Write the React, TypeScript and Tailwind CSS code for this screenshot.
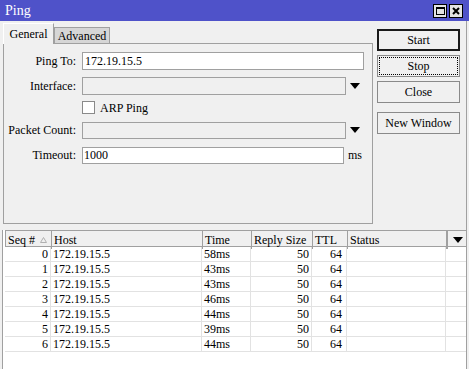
import React from 'react'

const ROWS = [
  { seq: 0, host: '172.19.15.5', time: '58ms', size: 50, ttl: 64 },
  { seq: 1, host: '172.19.15.5', time: '43ms', size: 50, ttl: 64 },
  { seq: 2, host: '172.19.15.5', time: '43ms', size: 50, ttl: 64 },
  { seq: 3, host: '172.19.15.5', time: '46ms', size: 50, ttl: 64 },
  { seq: 4, host: '172.19.15.5', time: '44ms', size: 50, ttl: 64 },
  { seq: 5, host: '172.19.15.5', time: '39ms', size: 50, ttl: 64 },
  { seq: 6, host: '172.19.15.5', time: '44ms', size: 50, ttl: 64 },
]

const COLS = 'grid grid-cols-[46px_151px_49px_61px_35px_99px_20px]'

function DownArrow() {
  return (
    <svg width="10" height="6" viewBox="0 0 10 6">
      <path d="M0 0 H10 L5 6 Z" fill="#000" />
    </svg>
  )
}

function Field({ label, children }: { label: string; children: React.ReactNode }) {
  return (
    <div className="flex items-center h-[18px]">
      <div className="w-[72px] text-right whitespace-nowrap">{label}</div>
      <div className="ml-[6px] flex items-center flex-1">{children}</div>
    </div>
  )
}

function Btn({ children, kind }: { children: React.ReactNode; kind?: 'default' | 'focus' }) {
  if (kind === 'default')
    return (
      <div className="h-[22px] border-2 border-[#1a1a1a] bg-[#f0f0f0] flex items-center justify-center">{children}</div>
    )
  if (kind === 'focus')
    return (
      <div className="h-[22px] border border-[#8a8a8a] bg-[#f0f0f0] p-[1px]">
        <div className="h-full border border-dotted border-black flex items-center justify-center">{children}</div>
      </div>
    )
  return (
    <div className="h-[22px] border border-[#8a8a8a] bg-[#f0f0f0] flex items-center justify-center">{children}</div>
  )
}

export default function App() {
  return (
    <div className="w-[469px] h-[369px] bg-[#f0f0f0] font-['Liberation_Serif',serif] text-[12px] text-black overflow-hidden flex flex-col">
      {/* Title bar */}
      <div className="h-[21px] shrink-0 bg-[#4f52c9] flex items-center justify-between pl-[5px] pr-[6px]">
        <span className="text-white text-[14px] leading-none">Ping</span>
        <div className="flex gap-[2px]">
          <div className="w-[14px] h-[14px] bg-[#e4e4e4] border border-black flex items-center justify-center">
            <div className="w-[9px] h-[8px] border border-black border-t-2" />
          </div>
          <div className="w-[14px] h-[14px] bg-[#e4e4e4] border border-black flex items-center justify-center">
            <svg width="8" height="8" viewBox="0 0 8 8">
              <path d="M1 1 L7 7 M7 1 L1 7" stroke="#000" strokeWidth="2" />
            </svg>
          </div>
        </div>
      </div>

      <div className="flex-1 flex flex-col border-r border-[#a0a0a0] mr-[2px]">
        {/* Top section */}
        <div className="flex pt-[2px]">
          <div className="ml-[3px] w-[370px] flex flex-col">
            <div className="flex items-end h-[21px] relative z-10 -mb-px">
              <div className="w-[51px] h-[21px] bg-[#f0f0f0] border border-b-0 border-[#a0a0a0] border-l-white border-t-white flex items-center justify-center">
                General
              </div>
              <div className="w-[56px] h-[17px] bg-[#d6d6d6] border border-[#a0a0a0] flex items-center justify-center">
                Advanced
              </div>
            </div>
            <div className="h-[181px] border border-[#a0a0a0] pt-[8px] pr-[8px] flex flex-col">
              <Field label="Ping To:">
                <div className="flex-1 h-[18px] bg-white border border-[#a0a0a0] px-[2px] flex items-center">172.19.15.5</div>
              </Field>
              <div className="mt-[7px]">
                <Field label="Interface:">
                  <div className="w-[264px] h-[18px] bg-[#f0f0f0] border border-[#a0a0a0]" />
                  <div className="flex-1 flex justify-center"><DownArrow /></div>
                </Field>
              </div>
              <div className="mt-[4px] h-[17px] flex items-center pl-[78px]">
                <div className="w-[13px] h-[13px] bg-white border border-[#8a8a8a]" />
                <span className="ml-[5px]">ARP Ping</span>
              </div>
              <div className="mt-[5px]">
                <Field label="Packet Count:">
                  <div className="w-[264px] h-[17px] bg-[#f0f0f0] border border-[#a0a0a0]" />
                  <div className="flex-1 flex justify-center"><DownArrow /></div>
                </Field>
              </div>
              <div className="mt-[7px]">
                <Field label="Timeout:">
                  <div className="w-[262px] h-[17px] bg-white border border-[#a0a0a0] px-[1px] flex items-center">1000</div>
                  <span className="ml-[4px]">ms</span>
                </Field>
              </div>
            </div>
          </div>

          <div className="ml-[4px] mt-[6px] w-[83px] flex flex-col">
            <Btn kind="default">Start</Btn>
            <div className="mt-[4px]"><Btn kind="focus">Stop</Btn></div>
            <div className="mt-[4px]"><Btn>Close</Btn></div>
            <div className="mt-[9px]"><Btn>New Window</Btn></div>
          </div>
        </div>

        {/* Table */}
        <div className="mt-[6px] ml-[2px] flex-1 border-l border-[#a0a0a0] bg-white flex flex-col">
          <div className={`${COLS} h-[17px] bg-[#f0f0f0] border-t border-b border-[#a0a0a0] ml-[2px] border-l`}>
            <div className="border-r border-[#a0a0a0] pl-[2px] flex items-center justify-between pr-[4px]">
              <span>Seq #</span>
              <svg width="7" height="6" viewBox="0 0 7 6">
                <path d="M3.5 0.5 L6.5 5.5 H0.5 Z" fill="none" stroke="#b0b0b0" />
              </svg>
            </div>
            <div className="border-r border-[#a0a0a0] pl-[2px] flex items-center">Host</div>
            <div className="border-r border-[#a0a0a0] pl-[2px] flex items-center">Time</div>
            <div className="border-r border-[#a0a0a0] pl-[2px] flex items-center">Reply Size</div>
            <div className="border-r border-[#a0a0a0] pl-[2px] flex items-center">TTL</div>
            <div className="border-r border-[#a0a0a0] pl-[2px] flex items-center">Status</div>
            <div className="flex items-center justify-center border-l border-[#a0a0a0]"><DownArrow /></div>
          </div>
          {ROWS.map(r => (
            <div key={r.seq} className={`${COLS} h-[15px] ml-[2px] leading-[14px]`}>
              <div className="border-r border-b border-[#e2e2e2] text-right pr-[2px]">{r.seq}</div>
              <div className="border-r border-b border-[#e2e2e2] pl-[2px]">{r.host}</div>
              <div className="border-r border-b border-[#e2e2e2] pl-[2px]">{r.time}</div>
              <div className="border-r border-b border-[#e2e2e2] text-right pr-[2px]">{r.size}</div>
              <div className="border-r border-b border-[#e2e2e2] text-right pr-[4px]">{r.ttl}</div>
              <div className="border-r border-b border-[#e2e2e2]" />
              <div className="border-b border-[#e2e2e2]" />
            </div>
          ))}
        </div>
      </div>
    </div>
  )
}
